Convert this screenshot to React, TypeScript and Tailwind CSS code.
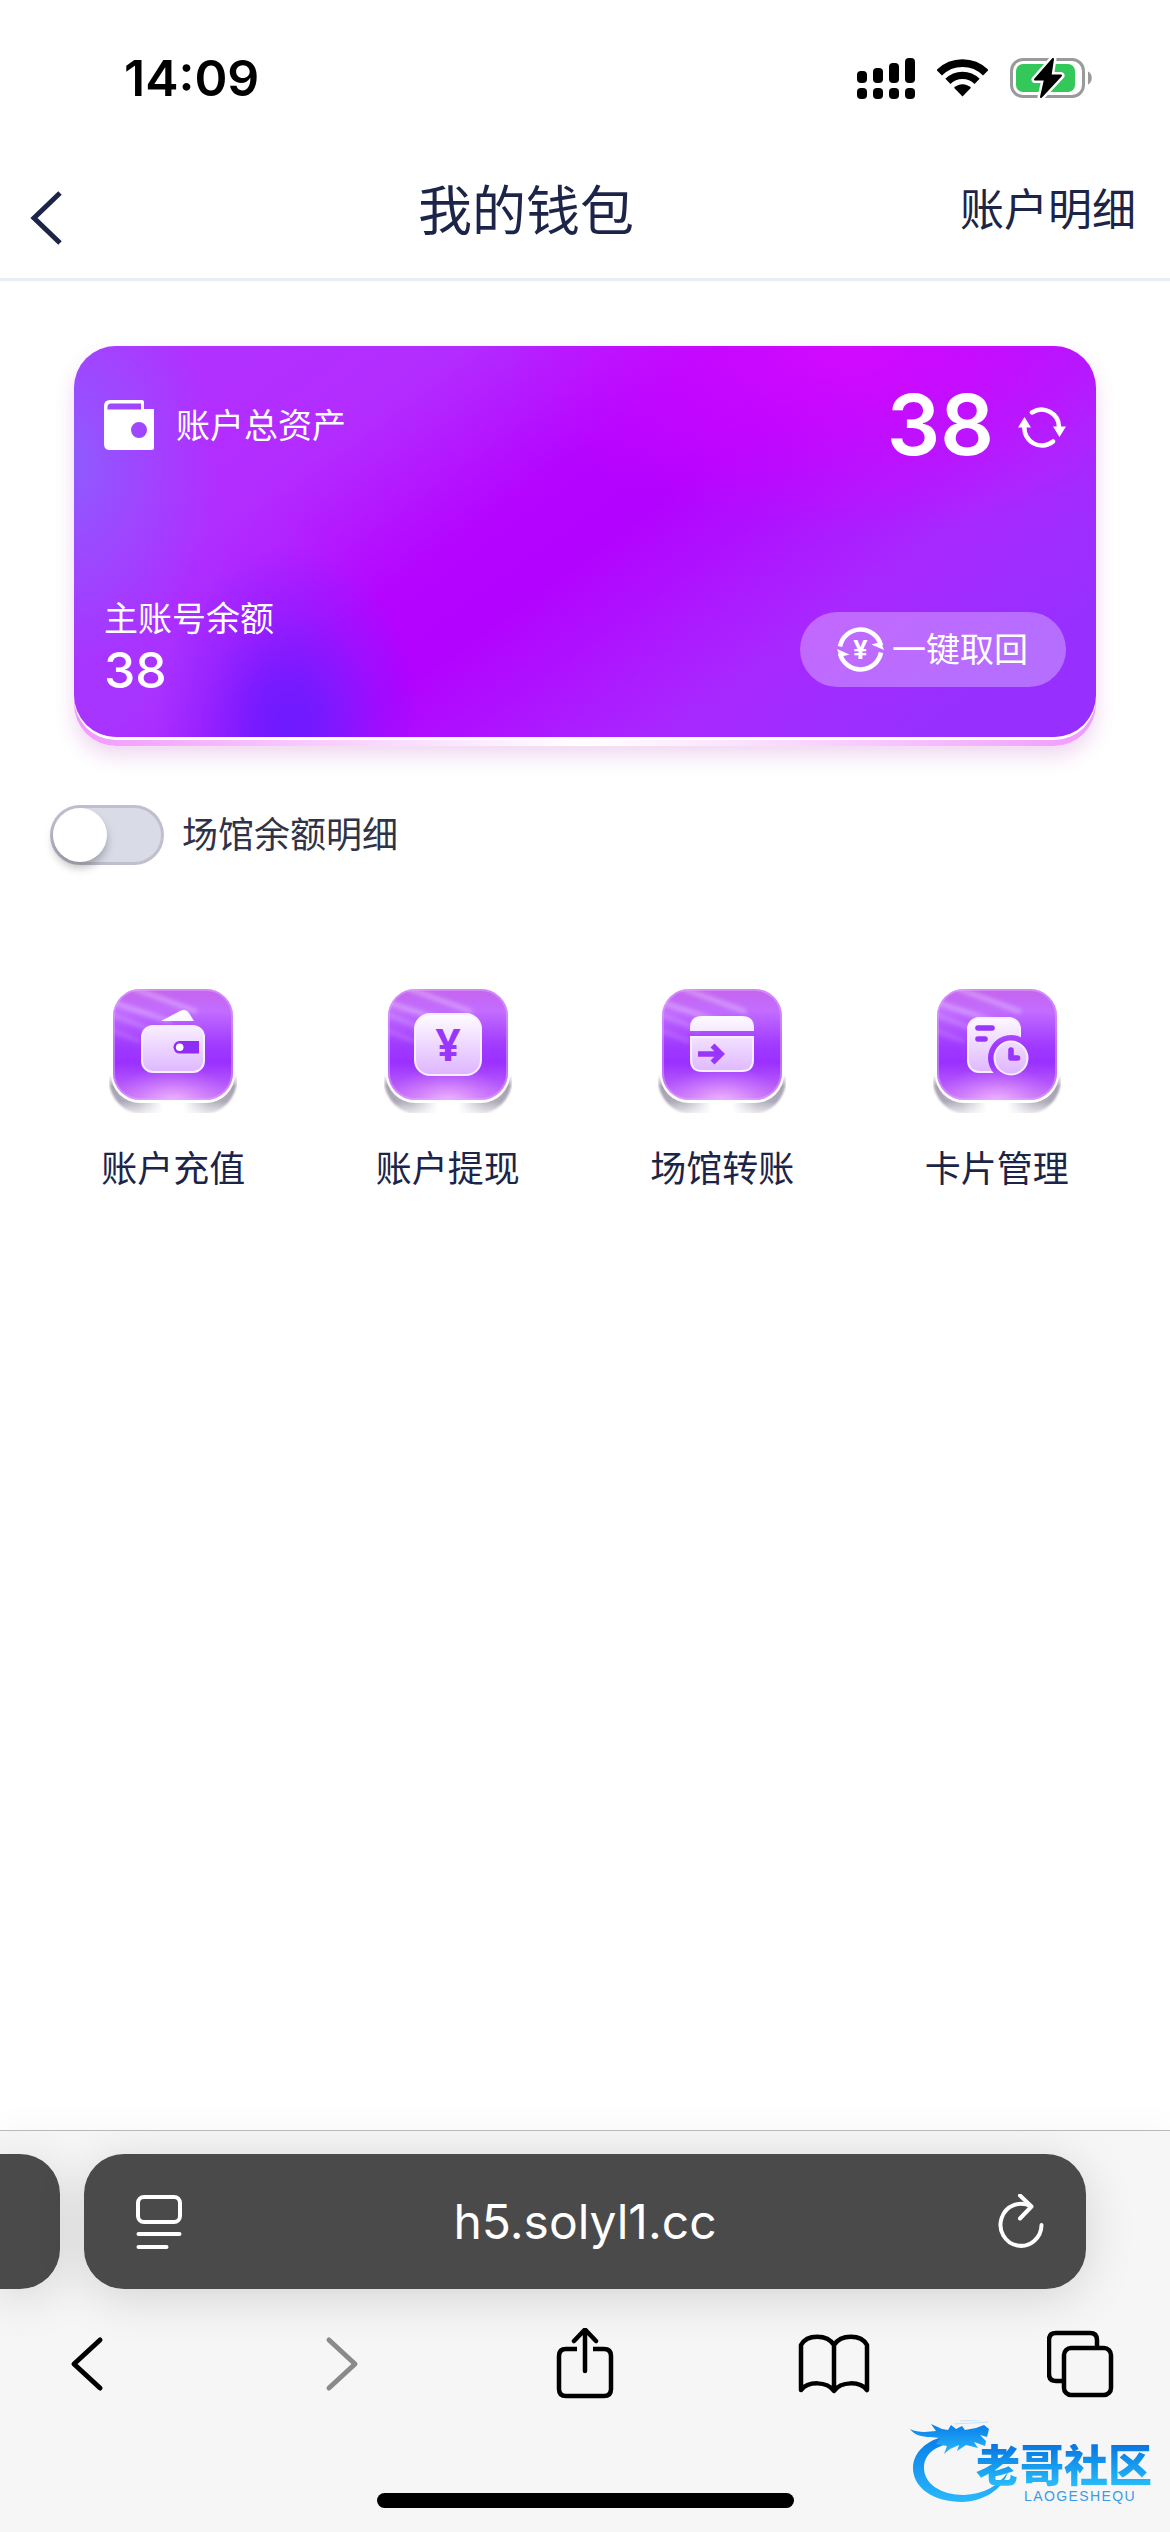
import React from "react";

function SignalIcon() {
  return (
    <svg width="58" height="41" viewBox="0 0 58 41" fill="#000" aria-hidden="true">
      <rect x="0" y="13" width="10" height="12" rx="4" />
      <rect x="16" y="10" width="10" height="15" rx="4" />
      <rect x="32" y="5" width="10" height="20" rx="4" />
      <rect x="48" y="0" width="10" height="25" rx="4" />
      <rect x="0" y="30" width="10" height="11" rx="4" />
      <rect x="16" y="30" width="10" height="11" rx="4" />
      <rect x="32" y="30" width="10" height="11" rx="4" />
      <rect x="48" y="30" width="10" height="11" rx="4" />
    </svg>
  );
}

function WifiIcon() {
  return (
    <svg width="51" height="38" viewBox="0 0 51 38" fill="none" stroke="#000" aria-hidden="true">
      <path d="M2.2 13.7A33 33 0 0 1 48.8 13.7" strokeWidth="7.8" />
      <path d="M10.9 22.4A20.7 20.7 0 0 1 40.1 22.4" strokeWidth="7.2" />
      <path d="M25.5 37.5L17 28.8A12 12 0 0 1 34 28.8Z" fill="#000" stroke="none" />
    </svg>
  );
}

function BatteryIcon() {
  return (
    <svg width="83" height="42" viewBox="0 0 83 42" fill="none" aria-hidden="true">
      <rect x="1.5" y="2.5" width="72" height="37" rx="11.5" stroke="#9a9a9a" strokeWidth="3" />
      <rect x="6" y="7" width="59" height="28" rx="7" fill="#34c759" />
      <path d="M78 14.500C83 16 83 25.500 78 27.500Z" fill="#9a9a9a" />
      <path
        d="M43 2L25 22.500H35L31 40L51 18.500H40.500Z"
        fill="#000"
        stroke="#fff"
        strokeWidth="7"
        strokeLinejoin="round"
      />
      <path d="M43 2L25 22.500H35L31 40L51 18.500H40.500Z" fill="#000" stroke="#000" strokeWidth="2" strokeLinejoin="round" />
    </svg>
  );
}

function WalletIcon() {
  return (
    <svg width="50" height="50" viewBox="0 0 50 50" aria-hidden="true">
      <path
        fill="#fff"
        fillRule="evenodd"
        d="M6 0H38Q40 0 40 2V9H50V48Q50 50 48 50H6Q0 50 0 44V6Q0 0 6 0ZM7 3.500Q3.500 3.500 3.500 7V9.500H37V3.500ZM35 22A8 8 0 1 0 35 38A8 8 0 1 0 35 22Z"
      />
    </svg>
  );
}

function RefreshIcon() {
  return (
    <svg width="48" height="42" viewBox="0 0 48 42" fill="none" stroke="#fff" strokeWidth="4.500" strokeLinecap="round" aria-hidden="true">
      <path d="M14 6.500A17.500 17.500 0 0 1 41 21" />
      <path d="M35 20.500H48L41.500 31Z" fill="#fff" stroke="none" />
      <path d="M6.500 20A17.500 17.500 0 0 0 35 35.500" />
      <path d="M0 21.500H13L6.500 11Z" fill="#fff" stroke="none" />
    </svg>
  );
}

function RecallIcon() {
  return (
    <svg width="47" height="47" viewBox="0 0 47 47" fill="none" aria-hidden="true">
      <g stroke="#fff" strokeWidth="4.600">
        <path d="M3 20.500A21 21 0 0 1 44 19.500" />
        <path d="M44 26.500A21 21 0 0 1 3 27.500" />
      </g>
      <path d="M47 24L34.500 18.500L44 16Z" fill="#fff" />
      <path d="M0 23L12.500 28.500L3 31Z" fill="#fff" />
      <text x="23.500" y="33" textAnchor="middle" fill="#fff" className="font-['Inter'] text-[26px] font-bold">
        ¥
      </text>
    </svg>
  );
}

function Tile({ id, children }: { id: string; children: React.ReactNode }) {
  return (
    <svg width="128" height="128" viewBox="0 0 128 128" fill="none" aria-hidden="true">
      <defs>
        <linearGradient id={`${id}-base`} x1="0" y1="0" x2="0" y2="1">
          <stop offset="0" stopColor="#c565ee" />
          <stop offset="0.2" stopColor="#c26cff" />
          <stop offset="0.5" stopColor="#a13bff" />
          <stop offset="0.66" stopColor="#9a30ff" />
          <stop offset="1" stopColor="#c874f8" />
        </linearGradient>
        <radialGradient id={`${id}-glow`} cx="0.5" cy="1.02" r="0.52" gradientTransform="matrix(1 0 0 0.62 0 0.39)">
          <stop offset="0" stopColor="#f6bcff" />
          <stop offset="1" stopColor="#d080ff" stopOpacity="0" />
        </radialGradient>
        <linearGradient id={`${id}-plate`} x1="0" y1="0" x2="1" y2="0">
          <stop offset="0" stopColor="#a5a0ae" />
          <stop offset="0.22" stopColor="#bab5c3" />
          <stop offset="0.42" stopColor="#ffffff" />
          <stop offset="0.58" stopColor="#ffffff" />
          <stop offset="0.78" stopColor="#bab5c3" />
          <stop offset="1" stopColor="#a5a0ae" />
        </linearGradient>
        <linearGradient id={`${id}-fade`} x1="0" y1="90" x2="0" y2="128" gradientUnits="userSpaceOnUse">
          <stop offset="0" stopColor="#000" />
          <stop offset="0.3" stopColor="#fff" />
          <stop offset="0.7" stopColor="#fff" />
          <stop offset="1" stopColor="#555" />
        </linearGradient>
        <mask id={`${id}-mask`}>
          <rect width="128" height="128" fill={`url(#${id}-fade)`} />
        </mask>
        <linearGradient id={`${id}-ink`} x1="0" y1="28" x2="0" y2="90" gradientUnits="userSpaceOnUse">
          <stop offset="0" stopColor="#ffffff" />
          <stop offset="0.35" stopColor="#f4e4ff" />
          <stop offset="1" stopColor="#deb4ff" />
        </linearGradient>
        <clipPath id={`${id}-clip`}>
          <rect x="4" y="4" width="120" height="111" rx="27" />
        </clipPath>
        <filter id={`${id}-soft`} x="-0.3" y="-0.3" width="1.6" height="1.6">
          <feGaussianBlur stdDeviation="2.2" />
        </filter>
        <filter id={`${id}-edge`} x="-0.1" y="-0.1" width="1.2" height="1.2">
          <feGaussianBlur stdDeviation="1" />
        </filter>
      </defs>
      <g mask={`url(#${id}-mask)`}>
        <rect x="0" y="40" width="128" height="90" rx="36" fill={`url(#${id}-plate)`} filter={`url(#${id}-edge)`} />
      </g>
      <rect x="2" y="6" width="124" height="112" rx="29" fill="#fff" />
      <rect x="4" y="4" width="120" height="111" rx="27" fill={`url(#${id}-base)`} />
      <g clipPath={`url(#${id}-clip)`}>
        <g filter={`url(#${id}-soft)`} stroke="#fff" strokeLinecap="round">
          <path d="M26 4L86 26" strokeWidth="5" strokeOpacity="0.3" />
          <path d="M6 18L60 36" strokeWidth="5" strokeOpacity="0.3" />
          <path d="M4 30L40 44" strokeWidth="4" strokeOpacity="0.2" />
          <path d="M4 46L30 56" strokeWidth="4" strokeOpacity="0.16" />
        </g>
        <rect x="4" y="4" width="120" height="111" fill={`url(#${id}-glow)`} />
      </g>
      <rect x="5" y="5" width="118" height="109" rx="26" stroke="#e4a8ff" strokeOpacity="0.5" strokeWidth="2" />
      <g fill={`url(#${id}-ink)`}>{children}</g>
    </svg>
  );
}

function DepositIcon() {
  return (
    <Tile id="deposit">
      <path d="M52 36L71 26Q77 23 80 28L85 36Z" />
      <rect x="33" y="41" width="62" height="46" rx="11" stroke="#f8eeff" strokeWidth="2" />
      <path d="M90 56H70A6.300 6.300 0 0 0 70 68.500H90Z" fill="#8f2cf5" />
      <circle cx="70.700" cy="62.300" r="3.800" fill="#fff" />
    </Tile>
  );
}

function WithdrawIcon() {
  return (
    <Tile id="withdraw">
      <rect x="31" y="29" width="66" height="61" rx="15" stroke="#f8eeff" strokeWidth="2" />
      <text x="64" y="76" textAnchor="middle" fill="#9a35fb" className="font-['Noto_Sans'] text-[44px] font-bold">
        ¥
      </text>
    </Tile>
  );
}

function TransferIcon() {
  return (
    <Tile id="transfer">
      <path d="M32 46V43Q32 31 44 31H84Q96 31 96 43V46Z" />
      <path d="M33 52H95V75Q95 86 84 86H44Q33 86 33 75Z" stroke="#f8eeff" strokeWidth="2" />
      <path d="M40 69H63M54.500 60.500L63 69L54.500 77.500" fill="none" stroke="#9a35fb" strokeWidth="5.600" />
    </Tile>
  );
}

function CardIcon() {
  return (
    <Tile id="cards">
      <mask id="cards-cut">
        <rect width="128" height="128" fill="#fff" />
        <circle cx="78" cy="73" r="23" fill="#000" />
      </mask>
      <rect x="35" y="33" width="52" height="54" rx="11" stroke="#f8eeff" strokeWidth="2" mask="url(#cards-cut)" />
      <path d="M45 43H59M45 54H52" stroke="#9a35fb" strokeWidth="5.600" strokeLinecap="round" />
      <circle cx="78" cy="73" r="16.500" stroke="#f8eeff" strokeWidth="2" />
      <path d="M78 65V73H84.500" fill="none" stroke="#9a35fb" strokeWidth="5.600" strokeLinecap="round" strokeLinejoin="round" />
    </Tile>
  );
}

function Watermark() {
  return (
    <div className="pointer-events-none absolute right-[18px] bottom-[28px] flex w-[242px] justify-end pt-[26px]">
      <svg width="100" height="84" viewBox="0 0 100 84" fill="none" className="absolute bottom-0 left-0" aria-hidden="true">
        <defs>
          <linearGradient id="dragon" x1="0" y1="0" x2="0" y2="1">
            <stop offset="0" stopColor="#0a7cea" />
            <stop offset="1" stopColor="#29b8fb" />
          </linearGradient>
        </defs>
        <path
          fill="url(#dragon)"
          d="M36 16C16 20 3 33 3 48C3 68 24 82 52 82C74 81 92 70 98 52C88 66 74 74 54 75C30 75 14 63 14 48C14 35 24 27 38 24Z"
        />
        <path
          fill="url(#dragon)"
          d="M0 9C8 13 18 12 26 11L21 4L32 9L38 10L41 5L46 9L52 6L55 10L66 8L74 5L79 9L77 17L70 15L76 21L75 26L64 22L68 28L56 25L47 31L49 25L40 29L34 34L37 26L26 24L30 18L20 17C12 17 4 15 0 9Z"
        />
        <path d="M44 4L78 2M50 1L70 0" stroke="#c4e2fa" strokeWidth="1" />
      </svg>
      <div className="relative flex flex-col items-end">
        <span className="bg-gradient-to-b from-[#0a74e0] to-[#2cc0fc] bg-clip-text text-[44px] leading-[44px] font-black text-transparent">
          老哥社区
        </span>
        <span className="pr-4 font-['Liberation_Sans'] text-sm leading-4 tracking-widest text-[#3a9be8]">LAOGESHEQU</span>
      </div>
    </div>
  );
}

const actions = [
  { label: "账户充值", Icon: DepositIcon },
  { label: "账户提现", Icon: WithdrawIcon },
  { label: "场馆转账", Icon: TransferIcon },
  { label: "卡片管理", Icon: CardIcon },
];

export default function App() {
  return (
    <div className="flex min-h-screen flex-col overflow-x-hidden bg-white font-['Inter','Noto_Sans_CJK_SC',sans-serif] text-[#1c2448]">
      <div className="flex h-[141px] items-start justify-between pt-[48px] pr-[77px] pl-[124px]">
        <span className="text-[50px] leading-[60px] font-semibold text-black">14:09</span>
        <div className="flex h-[60px] items-center gap-[22px]">
          <SignalIcon />
          <WifiIcon />
          <BatteryIcon />
        </div>
      </div>

      <header className="flex h-[140px] items-center border-b-[3px] border-[#e9edf5] pr-[34px] pl-[30px]">
        <button type="button" aria-label="返回" className="w-[62px] pt-4">
          <svg width="32" height="54" viewBox="0 0 32 54" fill="none" stroke="#1c2448" strokeWidth="5" aria-hidden="true">
            <path d="M30 2L4 27L30 52" />
          </svg>
        </button>
        <h1 className="flex-1 pt-1 text-center text-[54px] leading-[72px] font-normal">我的钱包</h1>
        <a href="#details" className="text-[44px] leading-[60px]">
          账户明细
        </a>
      </header>

      <main className="flex-1">
        <section className="mx-[74px] mt-[65px] rounded-[42px] bg-gradient-to-r from-[#f09aff] via-white to-[#f09aff] pb-[9px] shadow-[0_10px_20px_rgba(180,60,180,0.2)]">
          <div className="rounded-[42px] bg-[radial-gradient(ellipse_13%_46%_at_21%_97%,#6e1aff_0%,rgba(110,26,255,0.85)_25%,rgba(110,26,255,0.3)_65%,transparent),radial-gradient(ellipse_15%_52%_at_-1%_30%,#8d5dff,transparent),radial-gradient(ellipse_34%_48%_at_76%_0%,#d20aff,transparent),radial-gradient(ellipse_32%_60%_at_0%_85%,#a834ff_20%,transparent),linear-gradient(144deg,#b032ff_0%,#b32cff_25%,#b504ff_42%,#b302ff_51%,#a828ff_72%,#9730ff_88%)] px-[30px] pt-[37px] pb-[40px] text-white shadow-[0_3px_0_#fff]">
            <div className="flex items-center justify-between">
              <div className="flex items-center gap-[22px]">
                <WalletIcon />
                <span className="pt-0.5 text-[34px] leading-[48px]">账户总资产</span>
              </div>
              <div className="flex items-center gap-6">
                <span className="text-[84px] leading-[84px] font-semibold">38</span>
                <button type="button" aria-label="刷新" className="pt-1">
                  <RefreshIcon />
                </button>
              </div>
            </div>
            <div className="mt-[128px] flex items-end justify-between">
              <div>
                <p className="text-[34px] leading-[48px]">主账号余额</p>
                <p className="text-[50px] leading-[54px] font-medium">38</p>
              </div>
              <button type="button" className="mb-[10px] flex h-[75px] items-center gap-2 rounded-full bg-white/30 pr-[38px] pl-[37px]">
                <RecallIcon />
                <span className="text-[34px] leading-[48px]">一键取回</span>
              </button>
            </div>
          </div>
        </section>

        <label className="mt-[59px] ml-[50px] flex w-fit items-center gap-[18px] text-[36px] leading-[60px] text-[#2e3347]">
          <input
            type="checkbox"
            role="switch"
            className="h-[60px] w-[114px] appearance-none rounded-full border-[3px] border-[#c0bfcf] bg-[#d9dbe7] before:block before:size-[54px] before:rounded-full before:bg-white before:shadow-[0_6px_8px_rgba(0,0,0,0.25)] before:content-['']"
          />
          场馆余额明细
        </label>

        <nav className="mt-[120px] grid grid-cols-4 px-9">
          {actions.map(({ label, Icon }) => (
            <button key={label} type="button" className="flex flex-col items-center gap-[29px] text-[36px] leading-[54px]">
              <Icon />
              {label}
            </button>
          ))}
        </nav>
      </main>

      <footer className="relative overflow-hidden border-t border-[#b9b9b9] bg-[#f6f6f6] pt-[23px] pb-6 shadow-[0_-6px_30px_rgba(0,0,0,0.03)]">
        <div className="flex gap-6 pr-[84px]">
          <div className="h-[135px] w-[60px] rounded-r-[40px] bg-[#4a4a4a] shadow-[0_8px_50px_rgba(0,0,0,0.14)]" />
          <div className="flex h-[135px] flex-1 items-center justify-between rounded-[40px] bg-[#4a4a4a] px-[42px] text-white shadow-[0_8px_50px_rgba(0,0,0,0.14)]">
            <button type="button" aria-label="页面设置" className="flex w-14 justify-end">
              <svg width="46" height="56" viewBox="0 0 46 56" fill="none" stroke="#fff" strokeWidth="4" strokeLinecap="round" aria-hidden="true">
                <rect x="2" y="3" width="42" height="25" rx="6" />
                <path d="M2.500 40H43.500M2.500 53H30.500" />
              </svg>
            </button>
            <button type="button" className="text-[48px] leading-[60px]">
              h5.solyl1.cc
            </button>
            <button type="button" aria-label="重新加载" className="flex w-14 justify-end">
              <svg
                width="46"
                height="56"
                viewBox="0 0 46 56"
                fill="none"
                stroke="#fff"
                strokeWidth="4"
                strokeLinecap="round"
                strokeLinejoin="round"
                aria-hidden="true"
              >
                <path d="M43.500 31A20.500 21 0 1 1 33 12.500" />
                <path d="M22 1.500L33.500 12.500L22 24.500" />
              </svg>
            </button>
          </div>
        </div>

        <div className="mt-[39px] flex items-center justify-between px-[51px]">
          <button type="button" aria-label="后退">
            <svg width="72" height="72" viewBox="0 0 72 72" fill="none" stroke="#000" strokeWidth="5" strokeLinecap="round" strokeLinejoin="round" aria-hidden="true">
              <path d="M49 12L23 36L49 60" />
            </svg>
          </button>
          <button type="button" aria-label="前进" disabled>
            <svg width="72" height="72" viewBox="0 0 72 72" fill="none" stroke="#8a8a8a" strokeWidth="5" strokeLinecap="round" strokeLinejoin="round" aria-hidden="true">
              <path d="M29 12L55 36L29 60" />
            </svg>
          </button>
          <button type="button" aria-label="分享">
            <svg width="72" height="72" viewBox="0 0 72 72" fill="none" stroke="#000" strokeWidth="4.500" aria-hidden="true">
              <path d="M28 21H17Q10 21 10 28V61Q10 68 17 68H55Q62 68 62 61V28Q62 21 55 21H44" />
              <path d="M36 43V2M25 13L36 1.500L47 13" strokeLinecap="round" strokeLinejoin="round" />
            </svg>
          </button>
          <button type="button" aria-label="书签">
            <svg width="72" height="72" viewBox="0 0 72 72" fill="none" stroke="#000" strokeWidth="4.500" strokeLinejoin="round" aria-hidden="true">
              <path d="M36 17C29 6 9 6 3 17V62C10 53 29 53 36 63C43 53 62 53 69 62V17C63 6 43 6 36 17V62" />
            </svg>
          </button>
          <button type="button" aria-label="标签页">
            <svg width="72" height="72" viewBox="0 0 72 72" fill="none" stroke="#000" strokeWidth="4.500" aria-hidden="true">
              <path d="M50 19V12Q50 5 43 5H9Q2 5 2 12V46Q2 53 9 53H16" />
              <rect x="17" y="20" width="47" height="47" rx="7" />
            </svg>
          </button>
        </div>

        <div className="mx-auto mt-[93px] h-[15px] w-[417px] rounded-full bg-black" />
        <Watermark />
      </footer>
    </div>
  );
}
